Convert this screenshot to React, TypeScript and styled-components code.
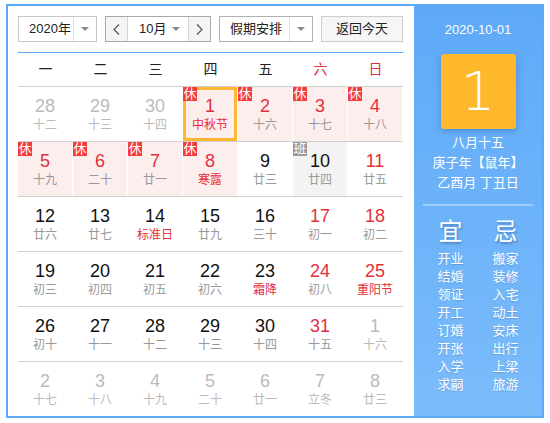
import styled, { createGlobalStyle } from "styled-components";

const GlobalStyle = createGlobalStyle`
  body {
    margin: 0;
    background: #fff;
    font-family: "Liberation Sans", "Noto Sans CJK SC", sans-serif;
  }
`;

type Day = {
  n: number;
  lunar: string;
  other?: boolean;
  red?: boolean;
  fest?: boolean;
  tag?: "休" | "班";
  selected?: boolean;
};

const weeks: Day[][] = [
  [
    { n: 28, lunar: "十二", other: true },
    { n: 29, lunar: "十三", other: true },
    { n: 30, lunar: "十四", other: true },
    { n: 1, lunar: "中秋节", red: true, fest: true, tag: "休", selected: true },
    { n: 2, lunar: "十六", red: true, tag: "休" },
    { n: 3, lunar: "十七", red: true, tag: "休" },
    { n: 4, lunar: "十八", red: true, tag: "休" },
  ],
  [
    { n: 5, lunar: "十九", red: true, tag: "休" },
    { n: 6, lunar: "二十", red: true, tag: "休" },
    { n: 7, lunar: "廿一", red: true, tag: "休" },
    { n: 8, lunar: "寒露", red: true, fest: true, tag: "休" },
    { n: 9, lunar: "廿三" },
    { n: 10, lunar: "廿四", tag: "班" },
    { n: 11, lunar: "廿五", red: true },
  ],
  [
    { n: 12, lunar: "廿六" },
    { n: 13, lunar: "廿七" },
    { n: 14, lunar: "标准日", fest: true },
    { n: 15, lunar: "廿九" },
    { n: 16, lunar: "三十" },
    { n: 17, lunar: "初一", red: true },
    { n: 18, lunar: "初二", red: true },
  ],
  [
    { n: 19, lunar: "初三" },
    { n: 20, lunar: "初四" },
    { n: 21, lunar: "初五" },
    { n: 22, lunar: "初六" },
    { n: 23, lunar: "霜降", fest: true },
    { n: 24, lunar: "初八", red: true },
    { n: 25, lunar: "重阳节", red: true, fest: true },
  ],
  [
    { n: 26, lunar: "初十" },
    { n: 27, lunar: "十一" },
    { n: 28, lunar: "十二" },
    { n: 29, lunar: "十三" },
    { n: 30, lunar: "十四" },
    { n: 31, lunar: "十五", red: true },
    { n: 1, lunar: "十六", other: true },
  ],
  [
    { n: 2, lunar: "十七", other: true },
    { n: 3, lunar: "十八", other: true },
    { n: 4, lunar: "十九", other: true },
    { n: 5, lunar: "二十", other: true },
    { n: 6, lunar: "廿一", other: true },
    { n: 7, lunar: "立冬", other: true },
    { n: 8, lunar: "廿三", other: true },
  ],
];

const weekdays = ["一", "二", "三", "四", "五", "六", "日"];
const yi = ["开业", "结婚", "领证", "开工", "订婚", "开张", "入学", "求嗣"];
const ji = ["搬家", "装修", "入宅", "动土", "安床", "出行", "上梁", "旅游"];

const RED = "#e3303c";

// ---------------- frame ----------------
const Frame = styled.div`
  margin: 4px 0 0 6px;
  width: 538px;
  height: 414px;
  box-sizing: border-box;
  border: 2px solid #5ca9f8;
  display: flex;
  background: #fff;
`;

const Main = styled.div`
  width: 406px;
  box-sizing: border-box;
  padding: 10px 11px 0 10px;
`;

// ---------------- toolbar ----------------
const Toolbar = styled.div`
  display: flex;
  gap: 8px;
  height: 26px;
  font-size: 13px;
  color: #222;
`;

const Box = styled.div<{ $w: number; $border: string }>`
  width: ${({ $w }) => $w}px;
  height: 26px;
  box-sizing: border-box;
  border: 1px solid ${({ $border }) => $border};
  display: flex;
  background: #fff;
`;

const Label = styled.div<{ $w: number }>`
  width: ${({ $w }) => $w}px;
  box-sizing: border-box;
  padding-left: 10px;
  line-height: 24px;
  white-space: nowrap;
`;

const CaretCell = styled.div`
  flex: 1;
  border-left: 1px solid #ddd;
  display: flex;
  align-items: center;
  justify-content: center;
`;

const Caret = styled.span`
  width: 0;
  height: 0;
  border-left: 4px solid transparent;
  border-right: 4px solid transparent;
  border-top: 4px solid #888;
`;

const ArrowBtn = styled.div<{ $side: "l" | "r" }>`
  width: 21px;
  background: #f5f5f5;
  display: flex;
  align-items: center;
  justify-content: center;
  border-${({ $side }) => ($side === "l" ? "right" : "left")}: 1px solid #d4d4d4;
`;

const MonthLabel = styled.div`
  flex: 1;
  padding: 0 8px 0 11px;
  line-height: 24px;
  display: flex;
  align-items: center;
  justify-content: space-between;
`;

const TodayBtn = styled.div`
  width: 82px;
  height: 26px;
  box-sizing: border-box;
  border: 1px solid #ccc;
  background: #f6f6f6;
  text-align: center;
  line-height: 24px;
`;

// ---------------- calendar ----------------
const WeekHead = styled.div`
  margin-top: 10px;
  display: grid;
  grid-template-columns: repeat(7, 55px);
  height: 33px;
  border-top: 1px solid #5ca9f8;
  border-bottom: 1px solid #cfcfcf;
`;

const WeekName = styled.div<{ $red?: boolean }>`
  text-align: center;
  line-height: 33px;
  font-size: 14px;
  color: ${({ $red }) => ($red ? RED : "#222")};
`;

const Row = styled.div`
  display: grid;
  grid-template-columns: repeat(7, 55px);
  height: 54px;
  & + & {
    border-top: 1px solid #cfcfcf;
  }
`;

const Cell = styled.div<{ $bg: string; $selected?: boolean }>`
  position: relative;
  box-sizing: border-box;
  border-right: 1px solid #fff;
  background: ${({ $bg }) => $bg};
  text-align: center;
  padding-top: 9px;
  box-shadow: ${({ $selected }) => ($selected ? "inset 0 0 0 3px #ffb630" : "none")};
`;

const Num = styled.div<{ $color: string }>`
  font-size: 18px;
  line-height: 20px;
  color: ${({ $color }) => $color};
`;

const Lunar = styled.div<{ $color: string }>`
  font-size: 12px;
  line-height: 18px;
  color: ${({ $color }) => $color};
`;

const Tag = styled.span<{ $bg: string }>`
  position: absolute;
  top: 0;
  left: 0;
  width: 14px;
  height: 14px;
  line-height: 14px;
  font-size: 13px;
  text-align: center;
  color: #fff;
  background: ${({ $bg }) => $bg};
`;

// ---------------- side panel ----------------
const Side = styled.div`
  width: 128px;
  background: linear-gradient(to bottom, #5ea9f8, #7bbcfb);
  color: #fff;
  display: flex;
  flex-direction: column;
  align-items: center;
`;

const DateText = styled.div`
  margin-top: 14px;
  font-size: 13px;
  line-height: 20px;
`;

const DayBox = styled.div`
  margin-top: 14px;
  width: 75px;
  height: 75px;
  border-radius: 3px;
  background: #ffb82b;
  box-shadow: 0 2px 6px rgba(30, 80, 150, 0.35);
  display: flex;
  align-items: center;
  justify-content: center;
  font-size: 54px;
  font-family: "DejaVu Sans", "Liberation Sans", sans-serif;
  font-weight: 200;
`;

const LunarInfo = styled.div`
  margin-top: 4px;
  font-size: 13px;
  line-height: 20px;
  text-align: center;
  white-space: nowrap;
`;

const Divider = styled.div`
  margin-top: 11px;
  width: 110px;
  height: 2px;
  background: rgba(255, 255, 255, 0.35);
`;

const Columns = styled.div`
  margin-top: 11px;
  display: grid;
  grid-template-columns: 40px 40px;
  column-gap: 15px;
  text-align: center;
`;

const BigWord = styled.div`
  font-size: 24px;
  line-height: 30px;
  margin-bottom: 3px;
  text-shadow: 1px 2px 2px rgba(40, 80, 140, 0.45);
`;

const Item = styled.div`
  font-size: 13px;
  line-height: 18px;
  text-shadow: 0 1px 1px rgba(40, 80, 140, 0.25);
`;

const Chevron = ({ dir }: { dir: "l" | "r" }) => (
  <svg width="7" height="11" viewBox="0 0 7 11">
    <polyline
      points={dir === "l" ? "6,0.5 1,5.5 6,10.5" : "1,0.5 6,5.5 1,10.5"}
      fill="none"
      stroke="#555"
      strokeWidth="1.2"
    />
  </svg>
);

function dayColors(d: Day) {
  if (d.other) return { num: "#bbb", lunar: "#bbb" };
  return {
    num: d.red ? RED : "#111",
    lunar: d.fest ? RED : "#999",
  };
}

function cellBg(d: Day) {
  if (d.tag === "休") return "#fdeeee";
  if (d.tag === "班") return "#f3f3f3";
  return "#fff";
}

export default function App() {
  return (
    <>
      <GlobalStyle />
      <Frame>
        <Main>
          <Toolbar>
            <Box $w={79} $border="#c8c8c8">
              <Label $w={54}>2020年</Label>
              <CaretCell>
                <Caret />
              </CaretCell>
            </Box>
            <Box $w={106} $border="#a8a8a8">
              <ArrowBtn $side="l">
                <Chevron dir="l" />
              </ArrowBtn>
              <MonthLabel>
                10月
                <Caret />
              </MonthLabel>
              <ArrowBtn $side="r">
                <Chevron dir="r" />
              </ArrowBtn>
            </Box>
            <Box $w={94} $border="#b0b0b0">
              <Label $w={69}>假期安排</Label>
              <CaretCell>
                <Caret />
              </CaretCell>
            </Box>
            <TodayBtn>返回今天</TodayBtn>
          </Toolbar>

          <WeekHead>
            {weekdays.map((w, i) => (
              <WeekName key={w} $red={i >= 5}>
                {w}
              </WeekName>
            ))}
          </WeekHead>

          {weeks.map((week, wi) => (
            <Row key={wi}>
              {week.map((d, di) => {
                const c = dayColors(d);
                return (
                  <Cell key={di} $bg={cellBg(d)} $selected={d.selected}>
                    {d.tag && <Tag $bg={d.tag === "休" ? "#f43c3c" : "#999"}>{d.tag}</Tag>}
                    <Num $color={c.num}>{d.n}</Num>
                    <Lunar $color={c.lunar}>{d.lunar}</Lunar>
                  </Cell>
                );
              })}
            </Row>
          ))}
        </Main>

        <Side>
          <DateText>2020-10-01</DateText>
          <DayBox>1</DayBox>
          <LunarInfo>
            八月十五
            <br />
            庚子年【鼠年】
            <br />
            乙酉月 丁丑日
          </LunarInfo>
          <Divider />
          <Columns>
            <div>
              <BigWord>宜</BigWord>
              {yi.map((t) => (
                <Item key={t}>{t}</Item>
              ))}
            </div>
            <div>
              <BigWord>忌</BigWord>
              {ji.map((t) => (
                <Item key={t}>{t}</Item>
              ))}
            </div>
          </Columns>
        </Side>
      </Frame>
    </>
  );
}
